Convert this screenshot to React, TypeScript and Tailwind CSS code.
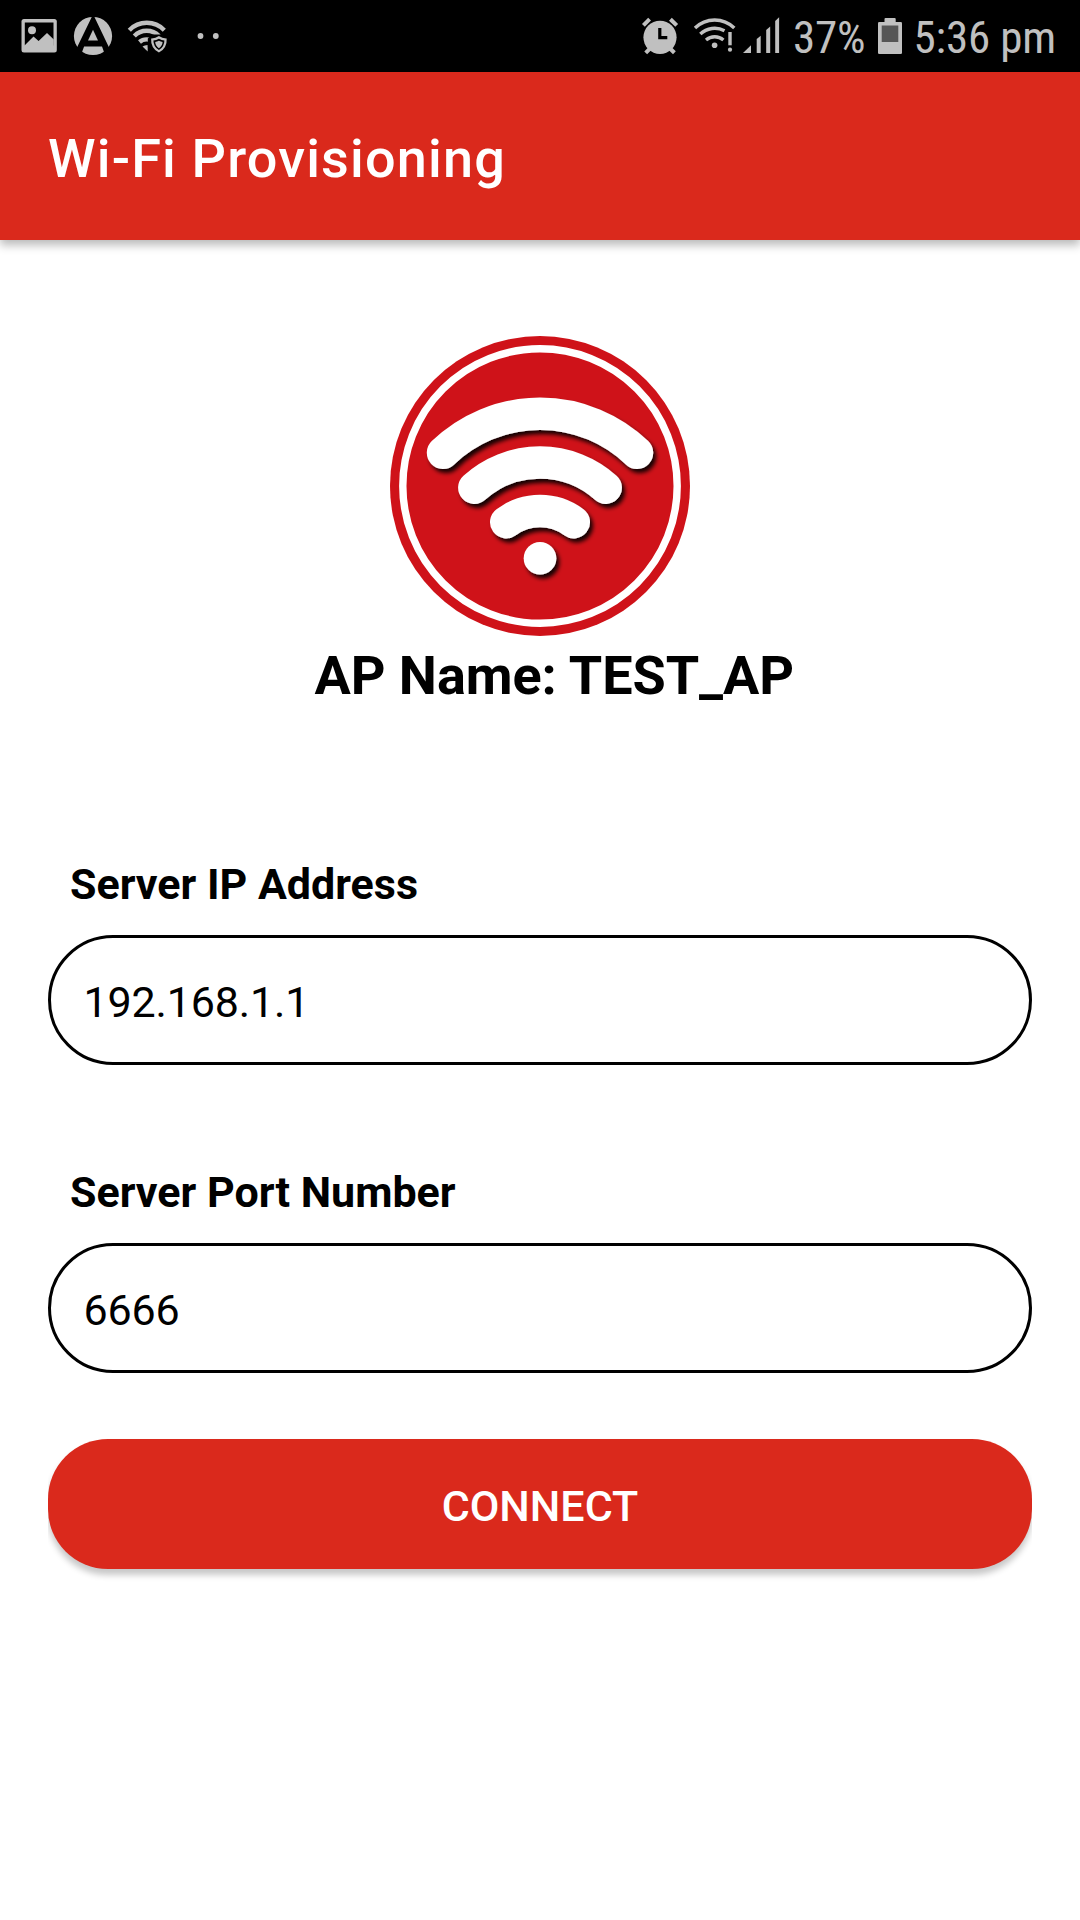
import type { ReactNode } from "react";

function StatusIcon({ x, width, className, children }: { x: number; width: number; className?: string; children: ReactNode }) {
  return (
    <svg
      width={width}
      height={72}
      viewBox={`${x} 0 ${width} 72`}
      className={`shrink-0 fill-[#c0c0c0] ${className ?? ""}`}
      aria-hidden="true"
    >
      {children}
    </svg>
  );
}

function StatusBar() {
  return (
    <div className="flex h-[72px] items-center justify-between bg-black pr-6 pl-5 text-[#c0c0c0]">
      <div className="flex items-center gap-3">
        {/* gallery */}
        <StatusIcon x={20} width={40}>
          <rect x="21.5" y="19" width="35.3" height="33.6" rx="2.5" />
          <rect x="24.8" y="22.5" width="28.7" height="23" fill="#000" />
          <circle cx="32" cy="30.2" r="4" />
          <path d="M24.5 45.5 33.5 36.6 38.6 41 47 33 53.8 39.6V48H24.5Z" />
        </StatusIcon>
        {/* letter badge */}
        <StatusIcon x={72} width={42}>
          <circle cx="93" cy="36" r="19.1" />
          <path d="M92 16.5h2.2L110 49.5 104.8 54.2 102 46.4H84.1L81.2 54.2 76 49.5Z" fill="#000" />
          <path d="M93 29.8 98 40.4H88Z" />
        </StatusIcon>
        {/* secure wi-fi */}
        <StatusIcon x={126} width={44}>
          <g fill="none" stroke="#c0c0c0" strokeWidth="4.4">
            <path d="M129.3 30.2a24.4 24.4 0 0 1 35 0" />
            <path d="M134.3 36a17.4 17.4 0 0 1 24.800 0" />
            <path d="M139.5 42a10.5 10.5 0 0 1 14 0" />
          </g>
          <path d="M142.5 46.6q2-1.6 5.2-1.6v6.4Z" />
          <path d="M147.8 38.4 152.600 34.400H170V56h-17q-5.200-4-5.200-10Z" fill="#000" />
          <path d="M158.9 36q3.6 2.6 7.8 2.4.6 9.6-7.8 14.2-8.4-4.6-7.8-14.2 4.2.2 7.8-2.4Z" />
          <path d="M158.9 38.8q2.7 1.6 5.5 1.7 0 6.3-5.5 9.6-5.5-3.3-5.5-9.6 2.8-.1 5.5-1.7Z" fill="#000" />
          <path d="M158.9 40.7q1.8 1 3.7 1.2-.3 4-3.7 6.3-3.4-2.3-3.7-6.3 1.9-.2 3.7-1.2Z" />
        </StatusIcon>
        <StatusIcon x={196} width={24} className="ml-3.5">
          <circle cx="200.5" cy="36" r="2.9" />
          <circle cx="215.8" cy="36" r="2.9" />
        </StatusIcon>
      </div>

      <div className="flex items-center">
        {/* alarm */}
        <StatusIcon x={640} width={40}>
          <g fill="none" stroke="#c0c0c0" strokeWidth="4">
            <path d="M643.4 25.4 649.6 19.2M670.4 19.2l6.3 6.2" />
            <path d="M645.7 52.8 651 47.5M674.4 52.8 669 47.5" />
          </g>
          <circle cx="660" cy="37.3" r="16.6" />
          <path d="M659.8 28v9.7h7.5" fill="none" stroke="#000" strokeWidth="3.2" />
        </StatusIcon>
        {/* wi-fi with warning */}
        <StatusIcon x={692} width={44} className="ml-3">
          <g fill="none" stroke="#c0c0c0" strokeWidth="3.4">
            <path d="M695 28a28 28 0 0 1 39.3 0" />
            <path d="M700.3 34A21 21 0 0 1 724.5 30.700" />
            <path d="M706 40a13.5 13.5 0 0 1 17.4 0" />
          </g>
          <circle cx="714.6" cy="45.2" r="2.8" />
          <rect x="728.3" y="32" width="3.4" height="13.3" />
          <circle cx="730" cy="49.7" r="2.1" />
        </StatusIcon>
        {/* mobile signal */}
        <StatusIcon x={742} width={38} className="ml-1.5">
          <path d="M743 53 751 45.2V53Z" />
          <path d="M756.7 39 760.7 35.8V53h-4Z" />
          <path d="M766.2 30 770.2 26.4V53h-4Z" />
          <path d="M775.2 21 779.1 17.2V53h-3.9Z" />
        </StatusIcon>
        <span className="ml-[13px] pt-[3px] text-[45px] leading-none tracking-[-0.1px] [font-stretch:condensed]">37%</span>
        <StatusIcon x={876} width={26} className="ml-[11px]">
          <rect x="877" y="22" width="24" height="32" rx="1.3" />
          <rect x="883.5" y="18" width="11.2" height="6" rx="1" />
          <rect x="880.7" y="25.5" width="16.6" height="16.5" fill="#565656" />
        </StatusIcon>
        <span className="ml-[11px] pt-[3px] text-[45px] leading-none tracking-[-0.15px] [font-stretch:condensed]">5:36 pm</span>
      </div>
    </div>
  );
}

function WifiLogo() {
  return (
    <svg width={300} height={300} viewBox="0 0 300 300" className="mx-auto block" aria-hidden="true">
      <defs>
        <filter id="drop" x="-20%" y="-20%" width="140%" height="140%">
          <feDropShadow dx="3" dy="4" stdDeviation="2.3" floodColor="#000" floodOpacity="0.9" />
        </filter>
      </defs>
      <circle cx="150" cy="150" r="150" fill="#cf1219" />
      <circle cx="150" cy="150" r="137.2" fill="none" stroke="#fff" strokeWidth="7.4" />
      <g filter="url(#drop)" fill="none" stroke="#fff" strokeWidth="32.4" strokeLinecap="round">
        <path d="M53 116.7A140.1 140.1 0 0 1 247 116.7" />
        <path d="M84.3 151.7A98.2 98.2 0 0 1 215.7 151.7" />
        <path d="M116.2 186.2A56.6 56.6 0 0 1 183.8 186.2" />
        <circle cx="150" cy="222.3" r="16.3" fill="#fff" stroke="none" />
      </g>
    </svg>
  );
}

function Field({ label, value }: { label: string; value: string }) {
  return (
    <div>
      <label className="block pl-[22px] text-[43px] leading-[50px] font-bold">{label}</label>
      <div className="mt-[26px] flex h-[130px] items-center rounded-full border-[3px] border-black pt-[5px] pl-[32.5px] text-[43px] tracking-[-0.15px]">
        {value}
      </div>
    </div>
  );
}

export default function App() {
  return (
    <div className="flex h-[1920px] w-[1080px] flex-col overflow-hidden bg-white font-[Roboto,sans-serif] text-black">
      <StatusBar />
      <header className="flex h-[168px] items-center bg-[#da291c] pt-[5px] pl-12 text-[54px] font-medium tracking-[1.17px] text-white shadow-[0_5px_9px_rgba(0,0,0,0.28)]">
        Wi-Fi Provisioning
      </header>

      <main className="flex flex-col px-12 pt-24">
        <WifiLogo />
        <h1 className="mt-2 ml-[266.5px] text-[54px] leading-[64px] font-bold tracking-[-0.05px]">
          AP Name: TEST_AP
        </h1>
        <div className="mt-[151px] flex flex-col gap-[102px]">
          <Field label="Server IP Address" value="192.168.1.1" />
          <Field label="Server Port Number" value="6666" />
        </div>
        <button className="mt-[66px] h-[130px] rounded-[60px] bg-[#da291c] pt-1 text-[43px] font-medium text-white shadow-[0_6px_6px_rgba(0,0,0,0.22)] [clip-path:inset(-10px_0_-20px_0)]">
          CONNECT
        </button>
      </main>
    </div>
  );
}
